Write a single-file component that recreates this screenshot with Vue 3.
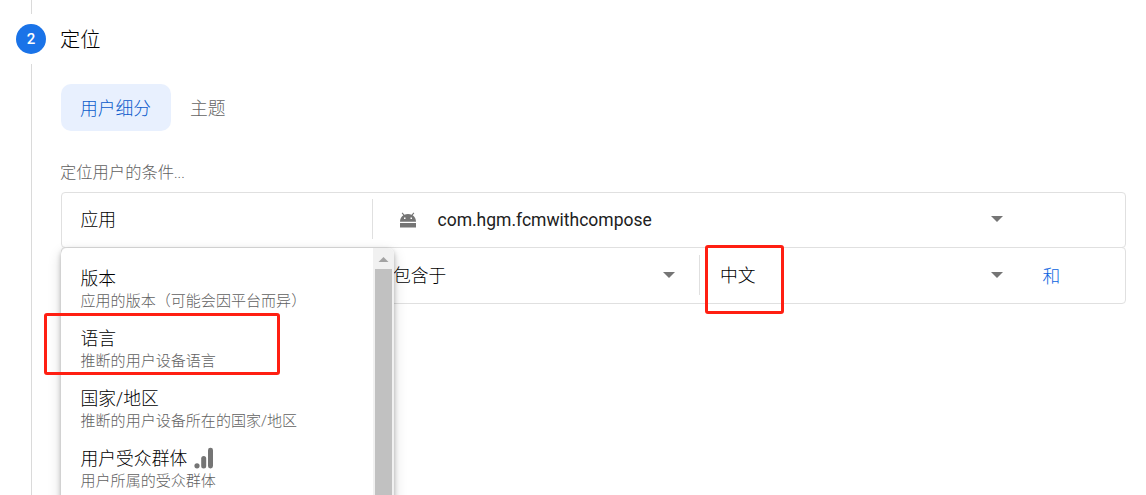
<script setup>
const options = [
  { name: '版本', hint: '应用的版本（可能会因平台而异）' },
  { name: '语言', hint: '推断的用户设备语言' },
  { name: '国家/地区', hint: '推断的用户设备所在的国家/地区' },
  { name: '用户受众群体', hint: '用户所属的受众群体', analytics: true },
]
</script>

<template>
  <div class="page">
    <aside class="rail">
      <div class="line top"></div>
      <div class="badge">2</div>
      <div class="line rest"></div>
    </aside>

    <main class="content">
      <h2 class="title">定位</h2>
      <nav class="tabs">
        <span class="tab active">用户细分</span>
        <span class="tab">主题</span>
      </nav>
      <p class="label">定位用户的条件<span class="dots">...</span></p>

      <section class="rules">
        <div class="row">
          <div class="cell first app-label">应用</div>
          <div class="cell app">
            <svg class="android" width="16" height="16" viewBox="0 0 16 16">
              <path d="M0 9.8C0 6.8 1.2 4.5 3.3 3.2L1.7 1.2 2.5.5 4.4 2.7C6.5 1.9 9.5 1.9 11.6 2.7L13.5.5l.8.7-1.6 2C14.8 4.5 16 6.8 16 9.8ZM4 5.4v1.5h1.5V5.4Zm6.5 0v1.5H12V5.4ZM0 11h16v4.6H0Z" fill="#757575" fill-rule="evenodd" />
            </svg>
            <span class="package">com.hgm.fcmwithcompose</span>
            <i class="caret"></i>
          </div>
          <div class="cell last"></div>
        </div>
        <div class="row second">
          <div class="cell first"></div>
          <div class="cell operator"><span>包含于</span><i class="caret"></i></div>
          <div class="cell value"><span>中文</span><i class="caret"></i></div>
          <div class="cell last and">和</div>
        </div>

        <div class="menu">
          <ul class="list">
            <li v-for="o in options" :key="o.name">
              <div class="name">
                <span>{{ o.name }}</span>
                <svg v-if="o.analytics" class="bars" width="20" height="22" viewBox="0 0 20 22">
                  <g fill="#757575">
                    <circle cx="3" cy="18.8" r="2.6" />
                    <rect x="7.2" y="9" width="5" height="12.4" rx="2.5" />
                    <rect x="14" y="0.8" width="5" height="20.6" rx="2.4" />
                  </g>
                </svg>
              </div>
              <div class="hint">{{ o.hint }}</div>
            </li>
          </ul>
          <div class="scrollbar">
            <svg width="21" height="21" viewBox="0 0 21 21"><path d="M5.5 14 10.5 9 15.5 14Z" fill="#a3a3a3" /></svg>
            <div class="thumb"></div>
          </div>
        </div>
      </section>
    </main>

    <div class="mark language"></div>
    <div class="mark chinese"></div>
  </div>
</template>

<style>
body {
  margin: 0;
  background: #fff;
}
</style>

<style scoped>
.page {
  position: relative;
  display: flex;
  width: 1146px;
  height: 495px;
  overflow: hidden;
  box-sizing: border-box;
  color: #000;
  background: #fff;
  font-family: Roboto, "Noto Sans CJK SC", sans-serif;
  font-size: 17.8px;
  font-weight: 300;
}
.page * {
  box-sizing: border-box;
}
.rail {
  width: 60px;
  padding-left: 16px;
  display: flex;
  flex-direction: column;
  flex: none;
}
.line {
  width: 1px;
  margin-left: 15px;
  background: #dadada;
}
.top {
  height: 14px;
}
.rest {
  flex: 1;
}
.badge {
  width: 30px;
  height: 30px;
  margin: 10px 0;
  border-radius: 50%;
  background: #1a73e8;
  color: #fff;
  font-size: 15px;
  font-weight: 500;
  line-height: 30px;
  text-align: center;
}
.content {
  width: 1066px;
  flex: none;
}
.title {
  margin: 25px 0 0;
  font-size: 20.2px;
  font-weight: 300;
  line-height: 30px;
}
.tabs {
  display: flex;
  margin: 29px 0 0 1px;
  height: 47px;
  line-height: 50px;
}
.tab {
  padding: 0 19px;
  color: #646464;
}
.active {
  width: 110px;
  padding: 0 0 0 19px;
  border-radius: 10px;
  background: #e8f0fe;
  color: #0b5bcb;
}
.label {
  margin: 32px 0 0;
  height: 20px;
  line-height: 20px;
  font-size: 16.3px;
  color: #616161;
}
.dots {
  font-size: 15px;
}
.rules {
  position: relative;
  margin: 9px 0 0 1px;
}
.row {
  display: flex;
  align-items: flex-start;
  height: 56px;
  padding-top: 6px;
  border: 1px solid #e0e0e0;
  border-radius: 4px;
}
.second {
  height: 57px;
  margin-top: -1px;
  padding-top: 7px;
}
.cell {
  height: 40px;
  display: flex;
  align-items: center;
}
.first {
  width: 310px;
  padding-left: 18.5px;
}
.app-label {
  padding-bottom: 2px;
}
.app {
  width: 650px;
  padding-left: 27px;
  border-left: 1px solid #e0e0e0;
}
.android {
  position: relative;
  top: 1px;
}
.package {
  margin-left: 21.5px;
  padding-top: 1px;
  font-size: 17.5px;
  font-weight: 400;
  color: #212121;
}
.caret {
  margin-left: auto;
  margin-right: 19px;
  border: 6px solid transparent;
  border-top-color: #757575;
  border-bottom: 0;
}
.operator {
  width: 327px;
  padding-left: 21px;
}
.operator span {
  padding-bottom: 2px;
}
.operator .caret {
  margin-right: 24px;
}
.value {
  width: 323px;
  padding-left: 20px;
  border-left: 1px solid #e0e0e0;
}
.value span {
  padding-bottom: 2px;
}
.and {
  padding: 0 0 1px 20.5px;
  color: #0a63e0;
}
.menu {
  position: absolute;
  left: 0;
  top: 56px;
  width: 333px;
  height: 300px;
  display: flex;
  overflow: hidden;
  background: #fff;
  border-radius: 6px 6px 0 0;
  box-shadow: 0 2px 5px rgba(0, 0, 0, 0.26), 0 5px 14px rgba(0, 0, 0, 0.16);
}
.list {
  flex: 1;
  margin: 0;
  padding: 19px 0 0 19.5px;
  list-style: none;
}
.list li {
  height: 60px;
}
.name {
  display: flex;
  height: 24px;
  line-height: 24px;
}
.bars {
  margin: 0 0 0 6.5px;
}
.hint {
  height: 20px;
  line-height: 20px;
  font-size: 15.05px;
  color: #616161;
}
.scrollbar {
  width: 21px;
  background: #f1f1f1;
}
.scrollbar svg {
  display: block;
}
.thumb {
  width: 17px;
  height: 280px;
  margin-left: 2px;
  background: #c1c1c1;
}
.mark {
  position: absolute;
  border: 3px solid #ff1f12;
  border-radius: 3px;
}
.language {
  left: 44px;
  top: 313px;
  width: 236px;
  height: 62px;
}
.chinese {
  left: 705px;
  top: 245px;
  width: 79px;
  height: 69px;
}
</style>
